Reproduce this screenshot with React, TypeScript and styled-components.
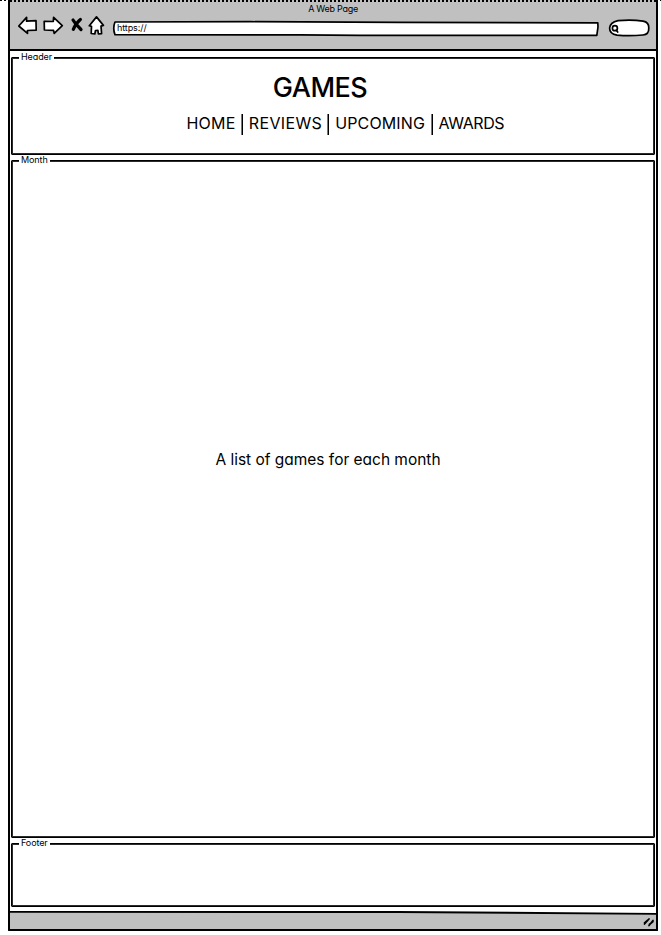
import React from "react";
import styled, { createGlobalStyle } from "styled-components";

const GlobalStyle = createGlobalStyle`
  * { box-sizing: border-box; }
  body { margin: 0; background: #fff; overflow: hidden; }
`;

const Page = styled.div`
  width: 661px;
  height: 935px;
  padding-left: 8px;
  background: repeating-linear-gradient(90deg, #000 0 2px, #fff 2px 4px) 0 0 / 661px 1px no-repeat;
  font-family: Inter, "Open Sans", sans-serif;
  font-feature-settings: "cv11", "calt" 0;
  color: #000;
`;

const BrowserWindow = styled.div`
  display: flex;
  flex-direction: column;
  width: 650px;
  height: 931px;
  border: 2px solid #000;
  border-top: 0;
  border-radius: 1px;
  background: #fff;
`;

const Toolbar = styled.header`
  height: 51px;
  flex: none;
  background: #c0c0c0;
  border-top: 2px dotted #000;
  border-bottom: 2px solid #000;
`;

const WindowTitle = styled.div`
  height: 14px;
  padding: 1px 0 0;
  font-size: 9px;
  line-height: 12px;
  letter-spacing: -0.27px;
  text-align: center;
`;

const Controls = styled.div`
  display: flex;
  align-items: flex-start;
  padding-left: 8px;
`;

const Icon = styled.svg`
  display: block;
  flex: none;
  fill: #fff;
  stroke: #000;
  stroke-width: 1.7;
  stroke-linejoin: round;
  stroke-linecap: round;
`;

const Field = styled.div<{ $width: number; $gap: number }>`
  display: grid;
  width: ${(p) => p.$width}px;
  height: 22px;
  margin-left: ${(p) => p.$gap}px;
  > * { grid-area: 1 / 1; }
`;

const Address = styled.span`
  padding: 6px 0 0 5px;
  font-size: 9px;
  line-height: 11px;
  letter-spacing: -0.1px;
  z-index: 1;
`;

const Content = styled.main`
  flex: 1;
  display: flex;
  flex-direction: column;
  gap: 5px;
  padding: 6px 1px 0;
`;

const Panel = styled.section<{ $height: number }>`
  display: flex;
  flex-direction: column;
  align-items: center;
  height: ${(p) => p.$height}px;
  padding: 1px 2px 1px 1px;
  border: 1px solid #000;
  border-radius: 1px;
  box-shadow: inset 0 0 0 1px #2c2c2c;
`;

const Legend = styled.div`
  align-self: flex-start;
  flex: none;
  height: 6px;
  margin: -4px 0 0 6px;
  padding: 0 2px;
  background: #fff;
  font-size: 9px;
  line-height: 3px;
  letter-spacing: -0.1px;
`;

const SiteTitle = styled.h1`
  margin: 11px 0 0;
  padding-right: 25px;
  font-size: 27px;
  line-height: 32px;
  font-weight: 500;
  letter-spacing: -0.5px;
`;

const Nav = styled.nav`
  display: flex;
  align-items: flex-start;
  width: 319px;
  margin: 9px 0 0 27px;
  font-size: 16px;
  line-height: 21px;
`;

const NavItem = styled.a<{ $width: number; $spacing: number }>`
  width: ${(p) => p.$width}px;
  white-space: nowrap;
  letter-spacing: ${(p) => p.$spacing}px;
`;

const Divider = styled.i`
  width: 2px;
  height: 21px;
  margin: 1px 5.67px 0;
  background: linear-gradient(90deg, #777 50%, #000 50%);
`;

const Message = styled.p`
  margin: auto;
  padding: 0 9px 81px 0;
  font-size: 15.5px;
  line-height: 20px;
  letter-spacing: -0.02px;
`;

const StatusBar = styled.footer`
  height: 18px;
  flex: none;
  background: #000;
  clip-path: polygon(0 0, 60% 0, 100% 2px, 100% 100%, 0 100%);
`;

const StatusFill = styled.div`
  display: flex;
  justify-content: flex-end;
  height: 18px;
  padding-top: 2px;
  background: #c0c0c0;
  clip-path: polygon(0 1.7px, 60% 2px, 100% 3.7px, 100% 100%, 0 100%);
`;

const links = [
  { label: "HOME", width: 49, spacing: 0.2 },
  { label: "REVIEWS", width: 73, spacing: 0.35 },
  { label: "UPCOMING", width: 90, spacing: 0.15 },
  { label: "AWARDS", width: 67, spacing: -0.4 },
];

export default function App() {
  return (
    <>
      <GlobalStyle />
      <Page>
        <BrowserWindow>
          <Toolbar>
            <WindowTitle>A Web Page</WindowTitle>
            <Controls>
              <Icon width="90" height="22" viewBox="18 16 90 22">
                <path d="M18.8 26L26.6 17.4V21.2L36 20.6L36.2 30.2L27.4 30.5L27.5 33.4Z" />
                <path d="M44.2 21.3L53.3 21.5L53.6 17.3L62.3 25.7L54.2 33.4L53.5 30.3L44.4 30Z" />
                <path d="M73 20Q75.5 24 81 29.5M80.4 19.5Q76 23 73.3 29.3" strokeWidth="3.2" fill="none" />
                <path d="M96.5 16.9L103.4 25.4L101 26.1L101.6 33.7L98.4 34L97.9 30.4L95.5 30.5L94.8 34L91.2 33.5L91.5 26.4L89.3 25.8Z" />
              </Icon>
              <Field $width={487} $gap={4}>
                <Icon width="487" height="22" viewBox="112 16 487 22">
                  <path d="M115 22L250 21.7L400 22.4L597.8 22.8L598 27L596.8 35.3L360 35.4L300 34.8L115 34.7Q112.5 28 115 22Z" />
                </Icon>
                <Address>https://</Address>
              </Field>
              <Field $width={43} $gap={9}>
                <Icon width="43" height="22" viewBox="608 16 43 22">
                  <path d="M618 20.6Q632 19.4 643 21.1Q649 22 648.8 28Q649 34.5 643 35Q630 36.3 617 35.2Q609.5 34 609.6 28Q610 22.5 618 20.6Z" />
                  <circle cx="614.9" cy="28.2" r="2.5" />
                  <path d="M616.4 30.2L617.7 32" />
                </Icon>
              </Field>
            </Controls>
          </Toolbar>
          <Content>
            <Panel $height={98}>
              <Legend>Header</Legend>
              <SiteTitle>GAMES</SiteTitle>
              <Nav>
                {links.map((link, i) => (
                  <React.Fragment key={link.label}>
                    {i > 0 && <Divider />}
                    <NavItem $width={link.width} $spacing={link.spacing}>{link.label}</NavItem>
                  </React.Fragment>
                ))}
              </Nav>
            </Panel>
            <Panel $height={678}>
              <Legend>Month</Legend>
              <Message>A list of games for each month</Message>
            </Panel>
            <Panel $height={64}>
              <Legend>Footer</Legend>
            </Panel>
          </Content>
          <StatusBar>
            <StatusFill>
              <Icon width="14" height="14" viewBox="642 914 14 14">
                <path d="M644.5 925L649 920M649 926.5L653 921.5M644.5 924L648 921M649.4 925.5L653 922.5" fill="none" />
              </Icon>
            </StatusFill>
          </StatusBar>
        </BrowserWindow>
      </Page>
    </>
  );
}
